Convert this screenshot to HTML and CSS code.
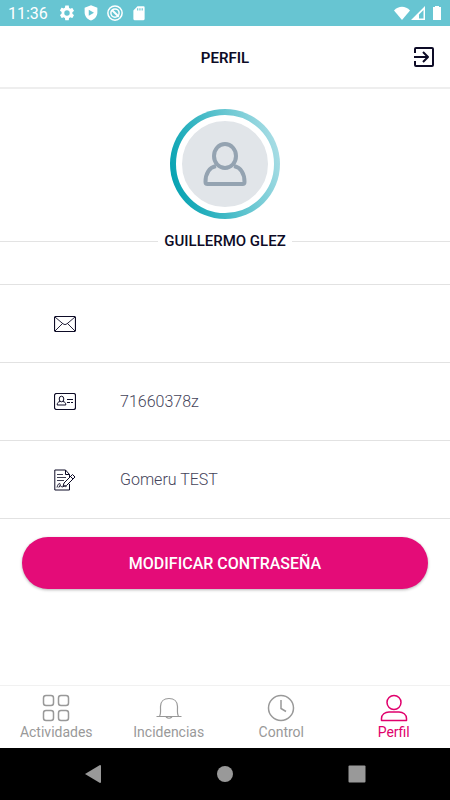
FILE: index.html
```html
<!DOCTYPE html>
<html lang="es">
<head>
<meta charset="utf-8">
<meta name="viewport" content="width=device-width, initial-scale=1">
<title>Perfil</title>
<link rel="stylesheet" href="styles.css">
</head>
<body>
<div class="status">
  <time class="clock">11:36</time>
  <div class="status-left">
    <svg width="18" height="18" viewBox="0 0 24 24" fill="currentColor"><path d="M19.14 12.94c.04-.3.06-.61.06-.94s-.02-.64-.07-.94l2.03-1.58a.49.49 0 0 0 .12-.61l-1.92-3.32a.49.49 0 0 0-.59-.22l-2.39.96a7 7 0 0 0-1.62-.94l-.36-2.54A.48.48 0 0 0 13.92 2h-3.84a.48.48 0 0 0-.48.41l-.36 2.54c-.59.24-1.13.57-1.62.94l-2.39-.96a.48.48 0 0 0-.59.22L2.72 8.47a.48.48 0 0 0 .12.61l2.03 1.58c-.05.3-.07.62-.07.94s.02.64.07.94l-2.03 1.98a.49.49 0 0 0-.12.61l1.92 3.32c.12.22.37.29.59.22l2.39-.96c.5.38 1.03.7 1.62.94l.36 2.54c.05.24.24.41.48.41h3.84c.24 0 .44-.17.47-.41l.36-2.54a7 7 0 0 0 1.62-.94l2.39.96c.22.08.47 0 .59-.22l1.92-3.32a.48.48 0 0 0-.12-.61zM12 15.600a3.600 3.600 0 1 1 0-7.200 3.600 3.600 0 0 1 0 7.200z"/></svg>
    <svg width="18" height="18" viewBox="0 0 24 24" fill="currentColor"><path fill-rule="evenodd" d="M12 1.500 3.500 5v6c0 5 3.600 9.800 8.500 11 4.900-1.200 8.500-6 8.500-11V5zM9 7.500v8l7-4z"/></svg>
    <svg width="18" height="18" viewBox="0 0 24 24" fill="none" stroke="currentColor" stroke-width="2"><circle cx="12" cy="12" r="9.500"/><circle cx="12" cy="12" r="5.500"/><path d="M8 8l9 9" stroke-width="2.600"/></svg>
    <svg width="18" height="18" viewBox="0 0 24 24" fill="currentColor"><path fill-rule="evenodd" d="M18 3h-8L4.500 8.500V20a1.500 1.500 0 0 0 1.500 1.500h12a1.500 1.500 0 0 0 1.500-1.500V4.500A1.500 1.500 0 0 0 18 3zM9.500 5.500h1.500v3H9.500zm3 0H14v3h-1.500zm3 0H17v3h-1.500z"/></svg>
  </div>
  <div class="status-right">
    <svg width="48" height="16" viewBox="0 0 48 16" fill="currentColor"><path d="M0 5.500C4.500.5 11.500.5 16 5.500L8 15z"/><path fill-rule="evenodd" d="M31 1v14H17zM29.500 5 25 9.500v4h4.500z"/><path d="M39 2h2V1h4v1h2v13h-8z"/></svg>
  </div>
</div>
<header class="header">
  <h1>PERFIL</h1>
  <button class="logout" type="button" aria-label="Salir">
    <svg width="22" height="22" viewBox="0 0 22 22" fill="none" stroke="currentColor" stroke-width="2" stroke-linejoin="round"><path d="M2 7V3a1 1 0 0 1 1-1h16a1 1 0 0 1 1 1v16a1 1 0 0 1-1 1H3a1 1 0 0 1-1-1v-4M1 11h13M10 6l5 5-5 5"/></svg>
  </button>
</header>
<main>
  <section class="profile">
    <div class="ring"><div class="avatar">
      <svg width="44" height="46" viewBox="0 0 44 46" fill="none" stroke="currentColor" stroke-width="4" stroke-linejoin="round"><ellipse cx="22" cy="15" rx="11" ry="12"/><path d="M13 25C6 26.500 2.500 33 2.500 41a2 2 0 0 0 2 2h35a2 2 0 0 0 2-2C41.500 33 38 26.500 31 25"/></svg>
    </div></div>
    <h2 class="name">GUILLERMO GLEZ</h2>
  </section>
  <ul class="details">
    <li>
      <svg width="22" height="16" viewBox="0 0 22 16" fill="none" stroke="currentColor"><rect x=".5" y=".5" width="21" height="15" rx="1.500" stroke-width="1.200"/><path d="m1 1 8 6.800q2 1.700 4 0L21 1M1 15l7.500-7.500M21 15l-7.500-7.500" stroke-width=".9"/></svg>
      <span></span>
    </li>
    <li>
      <svg width="22" height="17" viewBox="0 0 22 17" fill="none" stroke="currentColor"><rect x=".5" y=".5" width="21" height="16" rx="2" stroke-width="1.200"/><ellipse cx="7.500" cy="6" rx="2.300" ry="2.800"/><path d="M6 8.500c-2 .4-2.800 1.500-2.800 3.500h8.600c0-2-.8-3.100-2.800-3.500M13 6.500h6M13 9.500h3M17 9.500h2"/></svg>
      <span>71660378z</span>
    </li>
    <li>
      <svg width="22" height="22" viewBox="0 0 22 22" fill="none" stroke="currentColor" stroke-linejoin="round"><path d="M15.500 8V5.500l-4-4.500H.8v20h14.700v-6M11.500 1v4.500h4"/><path d="M3 5.500h6M3 8.500h9M3 11.500h7" stroke-width=".8"/><path d="m10 14 8.500-8.500 2.500 2.500-8.500 8.500-3.500 1zM16.500 7.500 19 10"/><path d="M3 18.500c1-5 4-5 3-2s-2 1.500 0 .5 1 2.500 3 .5 2 1 3.500 0" stroke-width=".9"/></svg>
      <span>Gomeru TEST</span>
    </li>
  </ul>
  <button class="primary" type="button">MODIFICAR CONTRASEÑA</button>
</main>
<nav class="tabs">
  <a href="#actividades"><svg width="28" height="28" viewBox="0 0 28 28" fill="none" stroke="currentColor" stroke-width="1.500"><rect x="1.500" y="1.500" width="10" height="10" rx="2.500"/><rect x="16.500" y="1.500" width="10" height="10" rx="2.500"/><rect x="1.500" y="16.500" width="10" height="10" rx="2.500"/><rect x="16.500" y="16.500" width="10" height="10" rx="2.500"/></svg>Actividades</a>
  <a href="#incidencias"><svg width="28" height="28" viewBox="0 0 28 28" fill="none" stroke="currentColor" stroke-width="1.200"><path d="M1.500 22.500h25M4.500 22C6 20.500 5.500 18 5.500 12.500 5.500 7.500 9 4.500 14 4.500s8.500 3 8.500 8c0 5.500-.5 8 1 9.500M11 23q3 2.500 6 0"/></svg>Incidencias</a>
  <a href="#control"><svg width="28" height="28" viewBox="0 0 28 28" fill="none" stroke="currentColor" stroke-width="1.500"><circle cx="14" cy="14" r="12.500"/><path d="M14 6v8.500l5 3"/></svg>Control</a>
  <a class="active" href="#perfil" aria-current="page"><svg width="28" height="28" viewBox="0 0 28 28" fill="none" stroke="currentColor" stroke-width="1.500" stroke-linejoin="round"><circle cx="14" cy="8.500" r="7"/><path d="M1.500 26.500v-2c0-4 3.500-6.500 7.500-6.500h10c4 0 7.500 2.500 7.500 6.500v2z"/></svg>Perfil</a>
</nav>
<div class="system">
  <button type="button" aria-label="Atrás"><svg width="18" height="20" viewBox="0 0 18 20" fill="currentColor"><path d="M1 10 16 1q1 0 1 1v16q0 1-1 1z"/></svg></button>
  <button type="button" aria-label="Inicio"><svg width="18" height="18" viewBox="0 0 18 18" fill="currentColor"><circle cx="9" cy="9" r="8"/></svg></button>
  <button type="button" aria-label="Recientes"><svg width="18" height="18" viewBox="0 0 18 18" fill="currentColor"><rect x=".5" y=".5" width="17" height="17" rx="1"/></svg></button>
</div>
</body>
</html>
```
FILE: styles.css
```css
* { box-sizing: border-box; }

body {
  margin: 0;
  min-height: 100vh;
  display: flex;
  flex-direction: column;
  font-family: Roboto, "Liberation Sans", sans-serif;
  color: #0d0b26;
  background: #fff;
}

svg { display: block; }

button {
  border: 0;
  padding: 0;
  background: none;
  color: inherit;
  font: inherit;
}

.status {
  display: flex;
  align-items: center;
  height: 26px;
  padding: 0 8px;
  background: #67c5d2;
  color: #fff;
}

.clock { font-size: 16px; font-weight: 400; margin-right: 10px; }
.status-left { display: flex; gap: 6px; }
.status-right { margin-left: auto; }

.header {
  display: grid;
  grid-template-columns: 1fr auto 1fr;
  align-items: center;
  height: 63px;
  padding: 0 15px;
  border-bottom: 2px solid #eee;
}

h1, h2 { margin: 0; line-height: 20px; }
h1 { grid-column: 2; padding-top: 2px; font-size: 15px; font-weight: 600; }
.logout { justify-self: end; }

main {
  flex: 1;
  display: flex;
  flex-direction: column;
}

.profile {
  display: flex;
  flex-direction: column;
  align-items: center;
  padding: 20px 0 33px;
}

.ring {
  padding: 6px;
  border-radius: 50%;
  background: linear-gradient(75deg, #00a0b0 5%, #35b5c2 35%, #a5dce4 90%);
}

.avatar {
  display: grid;
  place-items: center;
  width: 98px;
  height: 98px;
  border: 6px solid #fff;
  border-radius: 50%;
  background: #e1e5e9;
  color: #94a3b1;
}

.name {
  display: flex;
  align-items: center;
  gap: 6px;
  width: 100%;
  margin-top: 12px;
  font-size: 15px;
  font-weight: 500;
}

.name::before,
.name::after {
  content: "";
  flex: 1;
  height: 1px;
  background: #e3e3e3;
}

.details {
  list-style: none;
  margin: 0;
  padding: 0;
  border-bottom: 1px solid #e2e2e2;
}

.details li {
  display: grid;
  grid-template-columns: 44px 1fr;
  align-items: center;
  gap: 22px;
  height: 78px;
  padding: 0 54px;
  border-top: 1px solid #e2e2e2;
  font-size: 16px;
  font-weight: 300;
}

.details span { color: #45445a; }

.primary {
  height: 52px;
  margin: 18px 22px;
  border-radius: 26px;
  background: #e40c78;
  color: #fff;
  font-size: 16px;
  font-weight: 500;
  box-shadow: 0 1px 3px rgba(0, 0, 0, 0.3);
}

.tabs {
  display: grid;
  grid-template-columns: repeat(4, 1fr);
  height: 63px;
  padding-top: 8px;
  border-top: 1px solid #f1f1f1;
}

.tabs a {
  display: flex;
  flex-direction: column;
  align-items: center;
  gap: 2px;
  color: #999;
  font-size: 14px;
  line-height: 16px;
  text-decoration: none;
}

.tabs .active { color: #e0006c; }

.system {
  display: flex;
  align-items: center;
  justify-content: space-between;
  height: 52px;
  padding: 0 84px;
  background: #000;
  color: #999;
}
```
